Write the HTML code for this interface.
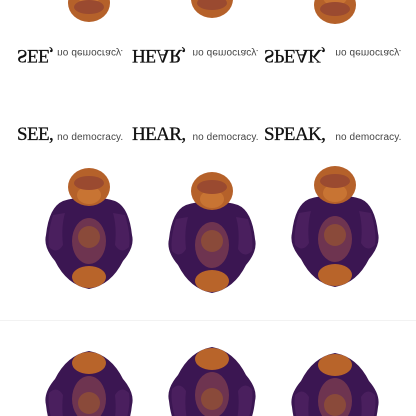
<!DOCTYPE html>
<html><head><meta charset="utf-8"><style>
html,body{margin:0;padding:0;background:#fff;width:416px;height:416px;overflow:hidden}
#w{position:relative;width:416px;height:416px;overflow:hidden}
.core{position:absolute;left:0;width:416px;height:225px}
.flip{transform:scaleY(-1)}
.t{position:absolute;top:30px;white-space:nowrap;line-height:20px}
.big{font-family:"Liberation Serif",serif;font-size:19px;color:#111;letter-spacing:-0.6px;-webkit-text-stroke:0.3px #111}
.sm{font-family:"Liberation Sans",sans-serif;font-size:10px;color:#444;margin-left:4px;letter-spacing:0.1px}
svg.m{position:absolute;width:92px;height:128px}
</style></head><body><div id="w">
<svg width="0" height="0" style="position:absolute">
<defs>
<symbol id="mk" viewBox="0 0 92 128">
<path d="M20 36 Q6 42 3 70 Q0 82 12 96 Q24 120 46 124 Q68 120 80 96 Q92 82 89 70 Q86 42 72 36 Q46 28 20 36Z" fill="#3b1652"/>
<path d="M10 50 Q4 70 6 82 Q14 90 20 80 Q18 62 22 48Z" fill="#4a1f5e"/>
<path d="M82 50 Q88 70 86 82 Q78 90 72 80 Q74 62 70 48Z" fill="#4a1f5e"/>
<ellipse cx="46" cy="76" rx="17" ry="23" fill="#6e3450"/>
<ellipse cx="46" cy="72" rx="11" ry="11" fill="#8a4a3a"/>
<ellipse cx="46" cy="112" rx="17" ry="11" fill="#b8642a"/>
<ellipse cx="46" cy="22" rx="21" ry="19" fill="#b5612a"/>
<ellipse cx="46" cy="30" rx="12" ry="9" fill="#c87433"/>
<ellipse cx="46" cy="18" rx="15" ry="7" fill="#9a4a30"/>
</symbol>
</defs></svg>

<div class="core flip" style="top:-130px">
<span class="t" style="left:17px"><span class="big">SEE,</span><span class="sm">no democracy.</span></span>
<span class="t" style="left:132px"><span class="big">HEAR,</span><span class="sm" style="margin-left:7px">no democracy.</span></span>
<span class="t" style="left:264px"><span class="big">SPEAK,</span><span class="sm" style="margin-left:10px">no democracy.</span></span>
<svg class="m" style="left:43px;top:70px"><use href="#mk"/></svg>
<svg class="m" style="left:166px;top:74px"><use href="#mk"/></svg>
<svg class="m" style="left:289px;top:68px"><use href="#mk"/></svg>
</div>

<div class="core" style="top:95px">
<span class="t" style="left:17px"><span class="big">SEE,</span><span class="sm">no democracy.</span></span>
<span class="t" style="left:132px"><span class="big">HEAR,</span><span class="sm" style="margin-left:7px">no democracy.</span></span>
<span class="t" style="left:264px"><span class="big">SPEAK,</span><span class="sm" style="margin-left:10px">no democracy.</span></span>
<svg class="m" style="left:43px;top:70px"><use href="#mk"/></svg>
<svg class="m" style="left:166px;top:74px"><use href="#mk"/></svg>
<svg class="m" style="left:289px;top:68px"><use href="#mk"/></svg>
</div>

<div style="position:absolute;top:320px;left:0;width:416px;height:1px;background:#f2f2f2"></div>

<div class="core flip" style="top:320px">
<svg class="m" style="left:43px;top:70px"><use href="#mk"/></svg>
<svg class="m" style="left:166px;top:74px"><use href="#mk"/></svg>
<svg class="m" style="left:289px;top:68px"><use href="#mk"/></svg>
</div>
</div></body></html>
